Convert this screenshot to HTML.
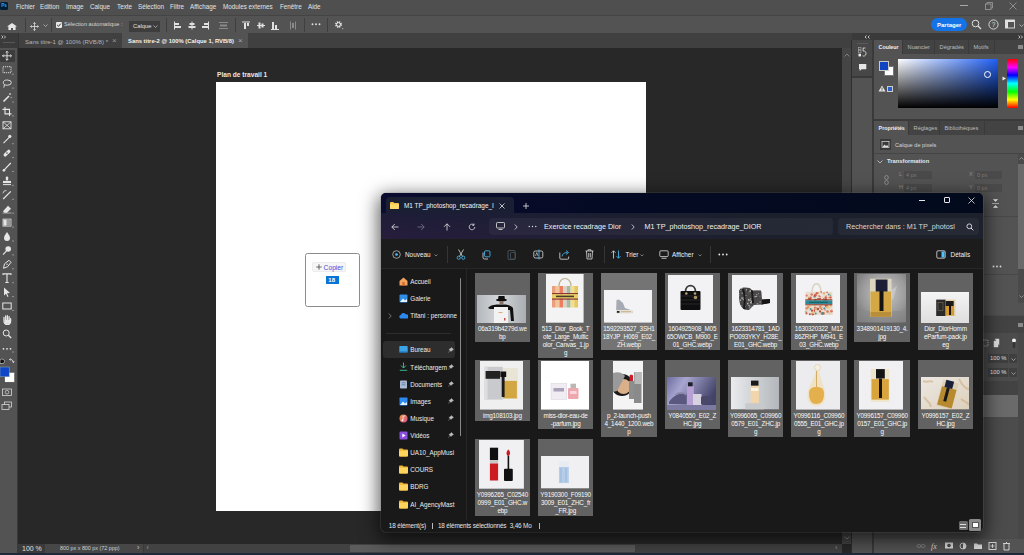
<!DOCTYPE html>
<html><head><meta charset="utf-8">
<style>
*{margin:0;padding:0;box-sizing:border-box}
html,body{width:1024px;height:555px;overflow:hidden;background:#282828;font-family:"Liberation Sans",sans-serif;}
.a{position:absolute}
.t{position:absolute;white-space:nowrap;line-height:1}
#menu{left:0;top:0;width:1024px;height:15px;background:#4f4f4f}
#menu .t{top:3.5px;font-size:6.3px;color:#e4e4e4}
#opts{left:0;top:15px;width:1024px;height:18px;background:#535353;border-top:1px solid #444}
.sep{position:absolute;width:1px;background:#3f3f3f}
#tabs{left:0;top:33px;width:852px;height:15px;background:#404040}
.ico{position:absolute;color:#d8d8d8}
#tool{left:0;top:48px;width:18px;height:505px;background:#535353;border-right:1px solid #3a3a3a}
#canvas{left:18px;top:48px;width:824px;height:496px;background:#282828}
#vscroll{left:842px;top:48px;width:10px;height:496px;background:#454545}
#art{left:216px;top:82px;width:430px;height:429px;background:#fff}
#status{left:18px;top:544px;width:824px;height:9px;background:#3a3a3a}
#taskline{left:0;top:553px;width:1024px;height:2px;background:#1e2a3c}
#rpanel{left:852px;top:33px;width:172px;height:520px;background:#3a3a3a}
.pnl{position:absolute;background:#535353}
.ptab{position:absolute;height:14px;background:#434343;font-size:5.6px;color:#bdbdbd;padding-top:3.6px;padding-left:4.6px;text-align:left;white-space:nowrap;border-right:1px solid #3a3a3a}
.ptab.on{background:#535353;color:#f0f0f0;font-weight:bold;font-size:5.3px}
#exp{left:381px;top:193px;width:602px;height:339px;background:#191919;border-radius:5px;overflow:hidden;box-shadow:0 0 0 0.6px rgba(120,120,120,0.35),0 5px 18px 3px rgba(0,0,0,0.62)}
.it{position:absolute;width:55.5px;background:#626262}
.lb{position:absolute;width:55.5px;text-align:center;font-size:6.3px;letter-spacing:-0.2px;line-height:8.3px;height:8.3px;color:#fafafa;white-space:nowrap;overflow:visible}
.nv{position:absolute;left:29.3px;width:48px;font-size:6.3px;line-height:9px;color:#ececec;white-space:nowrap;overflow:hidden}
</style></head><body>

<!-- MENU BAR -->
<div id="menu" class="a">
  <div class="a" style="left:0px;top:2px;width:8px;height:8px;background:#001e36;border-radius:1.5px;color:#31a8ff;font-size:4.6px;font-weight:bold;text-align:center;line-height:8px">Ps</div>
  <span class="t" style="left:16px">Fichier</span>
  <span class="t" style="left:40px">Edition</span>
  <span class="t" style="left:66px">Image</span>
  <span class="t" style="left:90px">Calque</span>
  <span class="t" style="left:117px">Texte</span>
  <span class="t" style="left:138px">Sélection</span>
  <span class="t" style="left:170px">Filtre</span>
  <span class="t" style="left:190px">Affichage</span>
  <span class="t" style="left:223px">Modules externes</span>
  <span class="t" style="left:280px">Fenêtre</span>
  <span class="t" style="left:308px">Aide</span>
  <div class="a" style="left:960px;top:5px;width:8px;height:0.8px;background:#a8a8a8"></div>
  <svg class="a" style="left:985px;top:2px" width="8" height="8" viewBox="0 0 8 8"><rect x="0.5" y="2" width="5.5" height="5.5" fill="none" stroke="#a8a8a8" stroke-width="0.7"/><path d="M2 2V0.5H7.5V6H6" stroke="#a8a8a8" stroke-width="0.7" fill="none"/></svg>
  <svg class="a" style="left:1009px;top:2px" width="8" height="8" viewBox="0 0 8 8"><path d="M0.5 0.5L7.5 7.5M7.5 0.5L0.5 7.5" stroke="#a8a8a8" stroke-width="0.7"/></svg>
</div>

<!-- OPTIONS BAR -->
<div id="opts" class="a">
  <svg class="a" style="left:7px;top:6.5px" width="10" height="7" viewBox="0 0 10 7"><path d="M5 0L0 3.6H1.4V7H4V5H6V7H8.6V3.6H10Z" fill="#e6e6e6"/></svg>
  <div class="sep" style="left:25px;top:2px;height:14px"></div>
  <svg class="a" style="left:29.5px;top:5.5px" width="9" height="9" viewBox="0 0 9 9"><path d="M4.5 0.5V8.5M0.5 4.5H8.5M4.5 0.5L3.3 1.7M4.5 0.5L5.7 1.7M4.5 8.5L3.3 7.3M4.5 8.5L5.7 7.3M0.5 4.5L1.7 3.3M0.5 4.5L1.7 5.7M8.5 4.5L7.3 3.3M8.5 4.5L7.3 5.7" stroke="#e0e0e0" stroke-width="0.8" fill="none"/></svg>
  <svg class="a" style="left:43px;top:8px" width="5" height="3" viewBox="0 0 5 3"><path d="M0.5 0.5L2.5 2.5L4.5 0.5" stroke="#bbb" stroke-width="0.8" fill="none"/></svg>
  <div class="sep" style="left:51px;top:2px;height:14px"></div>
  <div class="a" style="left:56px;top:6px;width:6px;height:6px;background:#e8e8e8;border-radius:1px"></div>
  <svg class="a" style="left:56px;top:6px" width="6" height="6" viewBox="0 0 6 6"><path d="M1.2 3L2.5 4.3L4.8 1.6" stroke="#333" stroke-width="1" fill="none"/></svg>
  <span class="t" style="left:64px;top:6px;font-size:5.6px;color:#d6d6d6">Sélection automatique :</span>
  <div class="a" style="left:129px;top:5px;width:31px;height:11px;background:#3d3d3d"></div>
  <span class="t" style="left:133px;top:7.5px;font-size:5.8px;color:#e0e0e0">Calque</span>
  <svg class="a" style="left:153px;top:9px" width="5" height="3" viewBox="0 0 5 3"><path d="M0.5 0.5L2.5 2.5L4.5 0.5" stroke="#bbb" stroke-width="0.8" fill="none"/></svg>
  <div class="sep" style="left:166px;top:2px;height:14px"></div>
  <svg class="a" style="left:173px;top:5px" width="170" height="10" viewBox="0 0 170 10">
    <g fill="#e0e0e0">
      <rect x="1" y="0.5" width="1" height="8"/><rect x="2" y="2" width="4" height="2"/><rect x="2" y="5" width="6" height="2"/>
      <rect x="18.5" y="0.5" width="1" height="8"/><rect x="16.5" y="2" width="5" height="2"/><rect x="15.5" y="5" width="7" height="2"/>
      <rect x="35" y="0.5" width="1" height="8"/><rect x="31" y="2" width="4" height="2"/><rect x="29" y="5" width="6" height="2"/>
      <rect x="69" y="0.5" width="8" height="1"/><rect x="71" y="2" width="2" height="6"/><rect x="74" y="2" width="2" height="3"/>
      <rect x="84" y="4" width="8" height="1"/><rect x="85.5" y="1.5" width="2" height="6"/><rect x="88.5" y="2.5" width="2" height="4"/>
      <rect x="98" y="8" width="8" height="1"/><rect x="99" y="1" width="2" height="7"/><rect x="102" y="4" width="2" height="4"/>
      <circle cx="139.5" cy="3.2" r="0.95"/><circle cx="143" cy="3.2" r="0.95"/><circle cx="146.5" cy="3.2" r="0.95"/>
    </g>
    <g fill="#8a8a8a">
      <rect x="46" y="1" width="9" height="1"/><rect x="47" y="3.5" width="7" height="2"/><rect x="46" y="7" width="9" height="1"/>
      <rect x="117" y="0.5" width="1" height="8"/><rect x="119" y="2" width="2" height="5"/><rect x="122" y="0.5" width="1" height="8"/>
    </g>
  </svg>
  <div class="sep" style="left:235px;top:2px;height:14px"></div>
  <div class="sep" style="left:304px;top:2px;height:14px"></div>
  <div class="sep" style="left:327px;top:2px;height:14px"></div>
  <svg class="a" style="left:334px;top:4px" width="10" height="10" viewBox="0 0 10 10"><circle cx="4.5" cy="4.5" r="2.6" fill="none" stroke="#e6e6e6" stroke-width="1.6" stroke-dasharray="1.3 0.75"/><circle cx="4.5" cy="4.5" r="1.9" fill="none" stroke="#e6e6e6" stroke-width="1"/><rect x="8.2" y="8.2" width="1" height="1" fill="#ccc"/></svg>
  <div class="a" style="left:931px;top:2px;width:36px;height:13px;background:#1473e6;border-radius:7px"></div>
  <span class="t" style="left:937px;top:5.5px;font-size:6px;font-weight:bold;color:#fff">Partager</span>
  <svg class="a" style="left:971px;top:3px" width="11" height="11" viewBox="0 0 11 11"><circle cx="4.5" cy="4.5" r="3.3" fill="none" stroke="#e0e0e0" stroke-width="1"/><path d="M7 7L10 10" stroke="#e0e0e0" stroke-width="1.2"/></svg>
  <svg class="a" style="left:988px;top:2.5px" width="11" height="11" viewBox="0 0 11 11"><circle cx="5.5" cy="5.5" r="4.6" fill="none" stroke="#e0e0e0" stroke-width="0.9"/><text x="5.5" y="8" font-size="6.5" text-anchor="middle" fill="#e0e0e0" font-family="Liberation Sans">?</text></svg>
  <svg class="a" style="left:1005px;top:3px" width="10" height="10" viewBox="0 0 10 10"><rect x="0.5" y="1" width="9" height="8" fill="none" stroke="#e0e0e0" stroke-width="0.9"/><rect x="0.5" y="1" width="9" height="2" fill="#e0e0e0"/><rect x="0.5" y="1" width="2.5" height="8" fill="#e0e0e0"/></svg>
  <svg class="a" style="left:1019px;top:8px" width="5" height="3" viewBox="0 0 5 3"><path d="M0.5 0.5L2.5 2.5L4.5 0.5" stroke="#bbb" stroke-width="0.8" fill="none"/></svg>
</div>

<!-- TABS -->
<div id="tabs" class="a">
  <div class="a" style="left:0;top:0;width:19px;height:15px;background:#3b3b3b;border-right:1px solid #333"></div>
  <svg class="a" style="left:1px;top:2px" width="6" height="4" viewBox="0 0 6 4"><path d="M0.5 0.5L2 2L0.5 3.5M3 0.5L4.5 2L3 3.5" stroke="#ddd" stroke-width="0.8" fill="none"/></svg>
  <div class="a" style="left:3px;top:8.5px;width:12px;height:1.5px;background:#585858"></div>
  <div class="a" style="left:19px;top:0;width:103px;height:15px;background:#404040"></div>
  <span class="t" style="left:25px;top:5.8px;font-size:6.05px;color:#b4b4b4">Sans titre-1 @ 100% (RVB/8) *</span>
  <span class="t" style="left:112px;top:4.3px;font-size:8px;color:#9a9a9a">×</span>
  <div class="a" style="left:122px;top:0;width:126px;height:15px;background:#535353"></div>
  <span class="t" style="left:128px;top:5.8px;font-size:5.85px;font-weight:bold;color:#f2f2f2">Sans titre-2 @ 100% (Calque 1, RVB/8)</span>
  <span class="t" style="left:238px;top:4.3px;font-size:8px;color:#a8a8a8">×</span>
</div>

<!-- TOOLBAR -->
<div id="tool" class="a">
<div class="a" style="left:0;top:2px;width:15px;height:11.5px;background:#3c3c3c;border-radius:1px"></div><svg class="a" style="left:0;top:-48px" width="18" height="500" viewBox="0 0 18 500"><g transform="translate(7,55.8)"><path d="M0 -4.5V4.5M-4.5 0H4.5M0 -4.5L-1.3 -3.2M0 -4.5L1.3 -3.2M0 4.5L-1.3 3.2M0 4.5L1.3 3.2M-4.5 0L-3.2 -1.3M-4.5 0L-3.2 1.3M4.5 0L3.2 -1.3M4.5 0L3.2 1.3" stroke="#e6e6e6" stroke-width="0.9" fill="none"/></g><g transform="translate(7,69.7)"><rect x="-4" y="-3" width="8" height="6" fill="none" stroke="#e6e6e6" stroke-width="0.9" stroke-dasharray="1.2 0.8"/></g><g transform="translate(7,83.6)"><ellipse cx="0.3" cy="-1" rx="4" ry="2.6" fill="none" stroke="#e6e6e6" stroke-width="0.9"/><path d="M-2.5 1L-3.2 4" stroke="#e6e6e6" stroke-width="0.9"/></g><g transform="translate(7,97.5)"><path d="M-3.5 4L2 -1.5" stroke="#e6e6e6" stroke-width="1.6"/><path d="M3 -4.5V-2.5M2 -3.5H4M4.2 -0.5V0.7" stroke="#e6e6e6" stroke-width="0.7"/></g><g transform="translate(7,111.4)"><path d="M-2 -4.5V2.5H4.5M-4.5 -2H2.5V4.5" stroke="#e6e6e6" stroke-width="1.1" fill="none"/></g><g transform="translate(7,125.3)"><rect x="-4" y="-3.5" width="8" height="7" fill="none" stroke="#e6e6e6" stroke-width="0.9"/><path d="M-4 -3.5L4 3.5M4 -3.5L-4 3.5" stroke="#e6e6e6" stroke-width="0.8"/></g><g transform="translate(7,139.2)"><path d="M-3.5 4L2 -1.5" stroke="#e6e6e6" stroke-width="1.1"/><circle cx="2.8" cy="-2.8" r="1.6" fill="#e6e6e6"/></g><g transform="translate(7,153.1)"><rect x="-4.2" y="-1.6" width="8.4" height="3.2" rx="1.6" transform="rotate(-45)" fill="#e6e6e6"/><circle cx="0" cy="0" r="0.8" fill="#535353"/></g><g transform="translate(7,167.0)"><path d="M-3.8 4.2L-1.6 1.6L3.8 -4" stroke="#e6e6e6" stroke-width="1.2" fill="none"/><circle cx="-3" cy="3.2" r="1.3" fill="#e6e6e6"/></g><g transform="translate(7,180.9)"><rect x="-1.2" y="-4.5" width="2.4" height="4" rx="1" fill="#e6e6e6"/><rect x="-4" y="0" width="8" height="2.2" fill="#e6e6e6"/><rect x="-4" y="3.2" width="8" height="1" fill="#e6e6e6"/></g><g transform="translate(7,194.8)"><path d="M-3.8 4.2L3.8 -3.5" stroke="#e6e6e6" stroke-width="1.2"/><path d="M-4 -1.5A3 3 0 0 1 -0.5 -4.2" stroke="#e6e6e6" stroke-width="0.8" fill="none"/></g><g transform="translate(7,208.7)"><path d="M-4 2.5L1 -3L4 0L0 4H-2.5Z" fill="#e6e6e6"/><path d="M-4.5 4.3H4.5" stroke="#e6e6e6" stroke-width="0.6"/></g><g transform="translate(7,222.6)"><rect x="-4" y="-3.5" width="8" height="7" fill="none" stroke="#e6e6e6" stroke-width="0.8"/><rect x="-3.5" y="-3" width="7" height="6" fill="#9a9a9a"/><rect x="-3.5" y="-3" width="3" height="6" fill="#e6e6e6"/></g><g transform="translate(7,236.5)"><path d="M0 -4.5C-2 -1.5 -3 0 -3 1.5A3 3 0 0 0 3 1.5C3 0 2 -1.5 0 -4.5Z" fill="#e6e6e6"/></g><g transform="translate(7,250.4)"><circle cx="1.2" cy="-1.4" r="2.8" fill="#e6e6e6"/><path d="M-0.5 0.5L-4 4.2" stroke="#e6e6e6" stroke-width="1.2"/></g><g transform="translate(7,264.3)"><path d="M-3.5 4L-2.5 -0.5L2 -4L4 -2L0.5 2.5Z" fill="none" stroke="#e6e6e6" stroke-width="1"/><circle cx="0" cy="0" r="0.7" fill="#e6e6e6"/></g><g transform="translate(7,278.2)"><path d="M-4 -3.3V-4.3H4V-3.3M0 -4.3V4.3M-1.7 4.3H1.7" stroke="#e6e6e6" stroke-width="1.1" fill="none"/></g><g transform="translate(7,292.1)"><path d="M-3 -4.5L3 1L0 1.2L1.5 4.5L0.5 4.8L-1 1.7L-3 3.5Z" fill="#e6e6e6"/></g><g transform="translate(7,306.0)"><rect x="-4.2" y="-3" width="8.4" height="6" fill="none" stroke="#e6e6e6" stroke-width="1"/></g><g transform="translate(7,319.9)"><path d="M-3 1V-2.5M-1.3 0V-4M0.4 0V-4.2M2.1 0.5V-3.2M3.6 1.5V-1.2M-3 1C-3 4 -1.5 4.5 0.5 4.5C2.5 4.5 3.6 3.5 3.6 1" stroke="#e6e6e6" stroke-width="1.3" fill="none" stroke-linecap="round"/><rect x="-2.5" y="0" width="5.5" height="4" fill="#e6e6e6"/></g><g transform="translate(7,333.8)"><circle cx="-0.8" cy="-0.8" r="3" fill="none" stroke="#e6e6e6" stroke-width="1"/><path d="M1.4 1.4L4.2 4.2" stroke="#e6e6e6" stroke-width="1.3"/></g><rect x="12.5" y="73.7" width="1" height="1" fill="#cfcfcf"/><rect x="12.5" y="87.6" width="1" height="1" fill="#cfcfcf"/><rect x="12.5" y="101.5" width="1" height="1" fill="#cfcfcf"/><rect x="12.5" y="115.4" width="1" height="1" fill="#cfcfcf"/><rect x="12.5" y="143.2" width="1" height="1" fill="#cfcfcf"/><rect x="12.5" y="157.1" width="1" height="1" fill="#cfcfcf"/><rect x="12.5" y="171.0" width="1" height="1" fill="#cfcfcf"/><rect x="12.5" y="184.9" width="1" height="1" fill="#cfcfcf"/><rect x="12.5" y="198.8" width="1" height="1" fill="#cfcfcf"/><rect x="12.5" y="212.7" width="1" height="1" fill="#cfcfcf"/><rect x="12.5" y="226.6" width="1" height="1" fill="#cfcfcf"/><rect x="12.5" y="240.5" width="1" height="1" fill="#cfcfcf"/><rect x="12.5" y="254.4" width="1" height="1" fill="#cfcfcf"/><rect x="12.5" y="268.3" width="1" height="1" fill="#cfcfcf"/><rect x="12.5" y="282.2" width="1" height="1" fill="#cfcfcf"/><rect x="12.5" y="296.1" width="1" height="1" fill="#cfcfcf"/><rect x="12.5" y="310.0" width="1" height="1" fill="#cfcfcf"/>
<g fill="#e6e6e6"><circle cx="3.5" cy="348.8" r="0.9"/><circle cx="7" cy="348.8" r="0.9"/><circle cx="10.5" cy="348.8" r="0.9"/></g>
<rect x="12.5" y="351.5" width="1" height="1" fill="#cfcfcf"/>
<path d="M0 360A2.5 2 0 0 1 4.5 361.5L3.5 363.5H0Z" fill="#111" stroke="#ddd" stroke-width="0.6"/>
<path d="M9.5 359.5C11.5 359 13 360 13.5 362.5M13.5 362.5L12.2 361.6M13.5 362.5L14.2 361.2M9.5 359.5L10.5 358.5M9.5 359.5L10.6 360.4" stroke="#e6e6e6" stroke-width="0.8" fill="none"/>
<rect x="4.7" y="372.4" width="9.9" height="9.8" fill="#fff" stroke="#444" stroke-width="0.5"/>
<rect x="0" y="367" width="9.2" height="9.8" fill="#0d47c7" stroke="#9aa" stroke-width="0.5"/>
<rect x="2.5" y="389" width="9" height="6.5" fill="none" stroke="#d6d6d6" stroke-width="0.8"/><circle cx="7" cy="392.2" r="1.8" fill="none" stroke="#d6d6d6" stroke-width="0.7"/>
<rect x="4.5" y="402" width="7" height="5" fill="none" stroke="#d6d6d6" stroke-width="0.8"/><rect x="2" y="404.5" width="7" height="5" fill="#535353" stroke="#d6d6d6" stroke-width="0.8"/>
</svg></div>

<!-- CANVAS -->
<div id="canvas" class="a"></div>
<div id="vscroll" class="a"><svg class="a" style="left:2px;top:5px" width="6" height="4" viewBox="0 0 6 4"><path d="M0.5 3.5L3 1L5.5 3.5" stroke="#9a9a9a" stroke-width="0.7" fill="none"/></svg><svg class="a" style="left:2px;top:488px" width="6" height="4" viewBox="0 0 6 4"><path d="M0.5 0.5L3 3L5.5 0.5" stroke="#9a9a9a" stroke-width="0.7" fill="none"/></svg></div>
<div class="a" style="left:851px;top:40px;width:1px;height:513px;background:#2e2e2e"></div>
<span class="t" style="left:217px;top:72px;font-size:6.6px;font-weight:bold;color:#e8e8e8">Plan de travail 1</span>
<div id="art" class="a"></div>

<!-- STATUS -->
<div id="status" class="a">
  <div class="a" style="left:1px;top:0;width:26px;height:9px;background:#3a3a3a"></div>
  <span class="t" style="left:4px;top:1px;font-size:7px;color:#e0e0e0">100 %</span>
  <div class="a" style="left:27px;top:0;width:98px;height:9px;background:#474747"></div>
  <span class="t" style="left:42px;top:2px;font-size:5.4px;color:#cfcfcf">800 px x 800 px (72 ppp)</span>
  <span class="t" style="left:119px;top:0px;font-size:7px;color:#cfcfcf">›</span>
  <div class="a" style="left:126px;top:0;width:698px;height:9px;background:#424242"></div>
  <span class="t" style="left:128.5px;top:0px;font-size:7px;color:#9a9a9a">‹</span>
  <div class="a" style="left:332px;top:1px;width:285px;height:7px;background:#5c5c5c;border-radius:1px"></div>
  <span class="t" style="left:817px;top:0px;font-size:7px;color:#9a9a9a">›</span>
</div>
<div id="taskline" class="a"></div>

<!-- RIGHT PANELS -->
<div id="rpanel" class="a">
  <!-- relative coords: origin 852,33 -->
  <svg class="a" style="left:12px;top:2px" width="6" height="4" viewBox="0 0 6 4"><path d="M2.5 0.5L1 2L2.5 3.5M5.5 0.5L4 2L5.5 3.5" stroke="#ddd" stroke-width="0.8" fill="none"/></svg>
  <svg class="a" style="left:166px;top:2px" width="6" height="4" viewBox="0 0 6 4"><path d="M0.5 0.5L2 2L0.5 3.5M3 0.5L4.5 2L3 3.5" stroke="#ddd" stroke-width="0.8" fill="none"/></svg>
  <!-- icon column -->
  <div class="pnl" style="left:0;top:6.5px;width:20px;height:36.5px;background:#474747"></div>
  <div class="a" style="left:5px;top:9.5px;width:11px;height:0.8px;background:#5a5a5a"></div>
  <svg class="a" style="left:6px;top:14px" width="9" height="10" viewBox="0 0 9 10"><rect x="0.5" y="0.5" width="2.5" height="2.2" fill="none" stroke="#aaa" stroke-width="0.6"/><rect x="0.5" y="3.6" width="2.5" height="2.2" fill="none" stroke="#aaa" stroke-width="0.6"/><rect x="0.5" y="6.8" width="2.5" height="2.6" fill="#eee"/><path d="M4.8 1H7.5M5.3 1L5 4C7 3.6 8.3 5 8 7C7.6 9 5.8 9.4 4.6 8.8" stroke="#e6e6e6" stroke-width="0.8" fill="none"/></svg>
  <svg class="a" style="left:7px;top:30.5px" width="8" height="8" viewBox="0 0 8 8"><path d="M0 0H7.3V5.2H2.5L0.8 7V5.2H0Z" fill="#e6e6e6"/></svg>
  <div class="pnl" style="left:0;top:45px;width:20px;height:475px;background:#535353"></div>
  <!-- Color panel -->
  <div class="pnl" style="left:22px;top:7px;width:150px;height:79px"></div>
  <div class="ptab on" style="left:22px;top:7px;width:29px">Couleur</div>
  <div class="ptab" style="left:51px;top:7px;width:32px">Nuancier</div>
  <div class="ptab" style="left:83px;top:7px;width:34px">Dégradés</div>
  <div class="ptab" style="left:117px;top:7px;width:26px">Motifs</div>
  <div class="ptab" style="left:143px;top:7px;width:29px;border-right:0"></div>
  <div class="a" style="left:166px;top:12px;width:5px;height:4px;background:#8a8a8a"></div>
  <div class="a" style="left:32px;top:33px;width:10px;height:10px;background:#fff;border:0.5px solid #777"></div>
  <div class="a" style="left:27px;top:28px;width:10px;height:10px;background:#0f45c0;border:1px solid #c8c8c8"></div>
  <svg class="a" style="left:26px;top:52px" width="8" height="7" viewBox="0 0 8 7"><path d="M4 0.5L7.5 6.5H0.5Z" fill="#e6e6e6"/><rect x="3.6" y="2.5" width="0.8" height="2.2" fill="#333"/><rect x="3.6" y="5.2" width="0.8" height="0.7" fill="#333"/></svg>
  <div class="a" style="left:35px;top:53px;width:6px;height:6px;background:#2a5fc7;border:0.6px solid #ccc"></div>
  <div class="a" style="left:46px;top:26px;width:100px;height:49px;background:linear-gradient(to right,#fff,#1f5ff5)"></div>
  <div class="a" style="left:46px;top:26px;width:100px;height:49px;background:linear-gradient(to bottom,rgba(0,0,0,0),#000)"></div>
  <div class="a" style="left:132.2px;top:38.2px;width:7px;height:7px;border:0.8px solid #fff;border-radius:50%"></div>
  <svg class="a" style="left:150px;top:43px" width="5" height="5" viewBox="0 0 5 5"><path d="M0.5 0.5L4 2.5L0.5 4.5Z" fill="#eee"/></svg>
  <div class="a" style="left:155px;top:26px;width:11px;height:49px;background:linear-gradient(to bottom,#ff0000,#ff00ff 17%,#0000ff 33%,#00ffff 50%,#00ff00 67%,#ffff00 83%,#ff0000)"></div>
  <!-- Properties -->
  <div class="pnl" style="left:22px;top:88px;width:150px;height:194.5px"></div>
  <div class="ptab on" style="left:22px;top:88px;width:35px">Propriétés</div>
  <div class="ptab" style="left:57px;top:88px;width:31px">Réglages</div>
  <div class="ptab" style="left:88px;top:88px;width:45px">Bibliothèques</div>
  <div class="ptab" style="left:133px;top:88px;width:39px;border-right:0"></div>
  <div class="a" style="left:166px;top:93px;width:5px;height:4px;background:#8a8a8a"></div>
  <div class="a" style="left:28px;top:106px;width:11px;height:11px;background:#3a3a3a"></div>
  <svg class="a" style="left:29px;top:107px" width="9" height="9" viewBox="0 0 9 9"><rect x="1" y="1.5" width="7" height="6" fill="none" stroke="#ddd" stroke-width="0.7"/><path d="M1.3 7.2L3.5 4.5L5 6L6.2 5L7.7 7.2Z" fill="#ddd"/></svg>
  <span class="t" style="left:43px;top:110.3px;font-size:5.6px;color:#d6d6d6">Calque de pixels</span>
  <div class="a" style="left:22px;top:120px;width:150px;height:1px;background:#444"></div>
  <svg class="a" style="left:25px;top:127px" width="6" height="4" viewBox="0 0 6 4"><path d="M0.5 0.5L3 3L5.5 0.5" stroke="#ccc" stroke-width="0.8" fill="none"/></svg>
  <span class="t" style="left:35px;top:126px;font-size:5.8px;font-weight:bold;color:#e8e8e8">Transformation</span>
  <span class="t" style="left:47px;top:139.3px;font-size:5.5px;color:#8c8c8c">L</span>
  <div class="a" style="left:52px;top:138px;width:28px;height:8px;background:#4a4a4a"></div>
  <span class="t" style="left:54px;top:139.5px;font-size:5.5px;color:#7c7c7c">4 px</span>
  <span class="t" style="left:47px;top:152.3px;font-size:5.5px;color:#8c8c8c">H</span>
  <div class="a" style="left:52px;top:151px;width:28px;height:8px;background:#4a4a4a"></div>
  <span class="t" style="left:54px;top:152.5px;font-size:5.5px;color:#7c7c7c">4 px</span>
  <svg class="a" style="left:32px;top:142px" width="5" height="10" viewBox="0 0 5 10"><ellipse cx="2.5" cy="2.5" rx="1.8" ry="2" fill="none" stroke="#999" stroke-width="0.8"/><ellipse cx="2.5" cy="7.5" rx="1.8" ry="2" fill="none" stroke="#999" stroke-width="0.8"/></svg>
  <span class="t" style="left:117px;top:139.3px;font-size:5.5px;color:#8c8c8c">X</span>
  <div class="a" style="left:123px;top:138px;width:27px;height:8px;background:#4a4a4a"></div>
  <span class="t" style="left:125px;top:139.5px;font-size:5.5px;color:#7c7c7c">0 px</span>
  <span class="t" style="left:117px;top:152.3px;font-size:5.5px;color:#8c8c8c">Y</span>
  <div class="a" style="left:123px;top:151px;width:27px;height:8px;background:#4a4a4a"></div>
  <span class="t" style="left:125px;top:152.5px;font-size:5.5px;color:#7c7c7c">0 px</span>
  <div class="a" style="left:166px;top:121px;width:6px;height:149px;background:#4a4a4a"></div>
  <div class="a" style="left:166px;top:131px;width:6px;height:105px;background:#6a6a6a"></div>
  <svg class="a" style="left:167px;top:124px" width="5" height="3" viewBox="0 0 5 3"><path d="M0.5 2.5L2.5 0.5L4.5 2.5" stroke="#aaa" stroke-width="0.7" fill="none"/></svg>
  <svg class="a" style="left:139px;top:166px" width="9" height="9" viewBox="0 0 9 9"><path d="M1 4.5H8M2.5 0.5H6.5L4.5 2.5Z M2.5 8.5H6.5L4.5 6.5Z" stroke="#ddd" stroke-width="0.6" fill="#ddd"/></svg>
  <div class="a" style="left:22px;top:183px;width:144px;height:1px;background:#484848"></div>
  <g></g>
  <svg class="a" style="left:139.5px;top:232.2px" width="10" height="3" viewBox="0 0 10 3"><circle cx="1.5" cy="1.5" r="0.9" fill="#e0e0e0"/><circle cx="5" cy="1.5" r="0.9" fill="#e0e0e0"/><circle cx="8.5" cy="1.5" r="0.9" fill="#e0e0e0"/></svg>
  <div class="a" style="left:22px;top:241px;width:144px;height:1px;background:#484848"></div>
  <svg class="a" style="left:167px;top:262px" width="5" height="3" viewBox="0 0 5 3"><path d="M0.5 0.5L2.5 2.5L4.5 0.5" stroke="#aaa" stroke-width="0.7" fill="none"/></svg>
  <!-- Layers -->
  <div class="pnl" style="left:22px;top:282px;width:150px;height:238px;background:#4c4c4c"></div>
  <div class="ptab" style="left:22px;top:282.5px;width:150px;height:17px;border-right:0;background:#434343"></div>
  <div class="a" style="left:166px;top:290px;width:5px;height:4px;background:#8a8a8a"></div>
  <svg class="a" style="left:128px;top:305px" width="44" height="10" viewBox="0 0 44 10"><rect x="1" y="2" width="7" height="6" fill="none" stroke="#ddd" stroke-width="0.7" stroke-dasharray="1 0.8"/><path d="M14 3H18V9H14Z M15 1H19V7" fill="#ddd" stroke="#ddd" stroke-width="0.5"/><circle cx="34" cy="2.5" r="2" fill="#eee"/><rect x="32.8" y="4" width="2.4" height="6" rx="1" fill="#333"/></svg>
  <div class="a" style="left:136px;top:321px;width:20px;height:9px;background:#3f3f3f"></div>
  <span class="t" style="left:138px;top:323px;font-size:5.8px;color:#e0e0e0">100 %</span>
  <div class="a" style="left:157px;top:321px;width:8px;height:9px;background:#3f3f3f"></div>
  <svg class="a" style="left:159px;top:325px" width="5" height="3" viewBox="0 0 5 3"><path d="M0.5 0.5L2.5 2.5L4.5 0.5" stroke="#bbb" stroke-width="0.7" fill="none"/></svg>
  <div class="a" style="left:136px;top:335px;width:20px;height:9px;background:#3f3f3f"></div>
  <span class="t" style="left:138px;top:337px;font-size:5.8px;color:#e0e0e0">100 %</span>
  <div class="a" style="left:157px;top:335px;width:8px;height:9px;background:#3f3f3f"></div>
  <svg class="a" style="left:159px;top:339px" width="5" height="3" viewBox="0 0 5 3"><path d="M0.5 0.5L2.5 2.5L4.5 0.5" stroke="#bbb" stroke-width="0.7" fill="none"/></svg>
  <div class="a" style="left:22px;top:348px;width:144px;height:14px;background:#434343"></div>
  <div class="a" style="left:22px;top:362px;width:144px;height:22px;background:#6a6a6a"></div>
  <div class="a" style="left:166px;top:300px;width:6px;height:206px;background:#484848"></div>
  <div class="a" style="left:22px;top:506px;width:150px;height:14px;background:#535353"></div>
  <svg class="a" style="left:64px;top:508px" width="108" height="10" viewBox="0 0 108 10">
   <g fill="none" stroke="#8a8a8a" stroke-width="0.8"><ellipse cx="3" cy="5" rx="2" ry="1.5"/><ellipse cx="7" cy="5" rx="2" ry="1.5"/></g>
   <text x="15" y="8" font-size="8" font-style="italic" fill="#ddd" font-family="Liberation Serif">fx</text>
   <rect x="29" y="1.5" width="8" height="6" fill="#ddd"/><circle cx="33" cy="4.5" r="1.8" fill="#4c4c4c"/>
   <circle cx="47" cy="5" r="3" fill="none" stroke="#ddd" stroke-width="0.9"/><path d="M47 2A3 3 0 0 1 47 8Z" fill="#ddd"/>
   <path d="M58 2.5H61L62 3.5H66V8H58Z" fill="#ddd"/>
   <rect x="73" y="1.5" width="7" height="7" fill="none" stroke="#ddd" stroke-width="0.9"/><path d="M76.5 3V7M74.5 5H78.5" stroke="#ddd" stroke-width="0.8"/>
   <path d="M87 2.5H94M88 3V9H93V3M90 1.5H91" stroke="#ddd" stroke-width="0.9" fill="none"/>
  </svg>
</div>

<!-- EXPLORER -->
<div id="exp" class="a">
  <div class="a" style="left:0;top:0;width:602px;height:20px;background:linear-gradient(to right,#0b0c30 0%,#050a24 35%,#020a1c 100%)"></div>
  <div class="a" style="left:4.7px;top:4.4px;width:128px;height:16px;background:#1b1f33;border-radius:4px 4px 0 0"></div>
  <svg class="a" style="left:9px;top:8.5px" width="9" height="7" viewBox="0 0 9 7"><path d="M0 1A1 1 0 0 1 1 0H3.3L4.3 1H8A1 1 0 0 1 9 2V6A1 1 0 0 1 8 7H1A1 1 0 0 1 0 6Z" fill="#f4c542"/><path d="M0 2.2H9V6A1 1 0 0 1 8 7H1A1 1 0 0 1 0 6Z" fill="#ffd86b"/></svg>
  <span class="t" style="left:23px;top:10.2px;font-size:6.4px;color:#f4f4f4">M1 TP_photoshop_recadrage_I</span>
  <svg class="a" style="left:118px;top:10px" width="6" height="6" viewBox="0 0 6 6"><path d="M0.5 0.5L5.5 5.5M5.5 0.5L0.5 5.5" stroke="#e6e6e6" stroke-width="0.8"/></svg>
  <svg class="a" style="left:141.5px;top:10px" width="6" height="6" viewBox="0 0 6 6"><path d="M3 0V6M0 3H6" stroke="#e6e6e6" stroke-width="0.8"/></svg>
  <div class="a" style="left:538px;top:7px;width:6px;height:0.8px;background:#e6e6e6"></div>
  <div class="a" style="left:562.5px;top:4px;width:6px;height:6px;border:0.8px solid #e6e6e6;border-radius:1px"></div>
  <svg class="a" style="left:587px;top:4px" width="7" height="7" viewBox="0 0 7 7"><path d="M0.5 0.5L6.5 6.5M6.5 0.5L0.5 6.5" stroke="#e6e6e6" stroke-width="0.8"/></svg>

  <div class="a" style="left:0;top:20px;width:602px;height:26px;background:linear-gradient(to right,#1d1d38 0%,#1c1f33 30%,#1c202d 60%,#1c212b 100%)"></div>
  <div class="a" style="left:0;top:20px;width:602px;height:26px;background:linear-gradient(to bottom,rgba(40,20,60,0) 0%,rgba(60,30,70,0.35) 100%);-webkit-mask-image:linear-gradient(to right,#000 0%,rgba(0,0,0,0.5) 30%,rgba(0,0,0,0) 60%)"></div>
  <svg class="a" style="left:10px;top:29.8px" width="8" height="8" viewBox="0 0 8 8"><path d="M7.5 4H0.8M3.8 1L0.8 4L3.8 7" stroke="#e6e6e6" stroke-width="0.8" fill="none"/></svg>
  <svg class="a" style="left:36px;top:29.8px" width="8" height="8" viewBox="0 0 8 8"><path d="M0.5 4H7.2M4.2 1L7.2 4L4.2 7" stroke="#7a7a85" stroke-width="0.8" fill="none"/></svg>
  <svg class="a" style="left:61.5px;top:29.8px" width="8" height="8" viewBox="0 0 8 8"><path d="M4 7.5V0.8M1 3.8L4 0.8L7 3.8" stroke="#e6e6e6" stroke-width="0.8" fill="none"/></svg>
  <svg class="a" style="left:87px;top:29.8px" width="8" height="8" viewBox="0 0 8 8"><path d="M6.8 4A2.8 2.8 0 1 1 5.8 1.8M6 0.5V2.3H4.2" stroke="#e6e6e6" stroke-width="0.8" fill="none"/></svg>
  <div class="a" style="left:108px;top:25px;width:344px;height:17px;background:rgba(255,255,255,0.045);border-radius:4px"></div>
  <svg class="a" style="left:114.5px;top:29px" width="9" height="8" viewBox="0 0 9 8"><rect x="0.5" y="0.5" width="8" height="5.5" rx="0.8" fill="none" stroke="#e6e6e6" stroke-width="0.8"/><path d="M2.5 7.5H6.5" stroke="#e6e6e6" stroke-width="0.8"/></svg>
  <svg class="a" style="left:133px;top:30.5px" width="4" height="6" viewBox="0 0 4 6"><path d="M0.8 0.5L3.2 3L0.8 5.5" stroke="#e0e0e0" stroke-width="0.8" fill="none"/></svg>
  <svg class="a" style="left:146.5px;top:32px" width="9" height="3" viewBox="0 0 9 3"><circle cx="1.2" cy="1.5" r="0.7" fill="#e0e0e0"/><circle cx="4.5" cy="1.5" r="0.7" fill="#e0e0e0"/><circle cx="7.8" cy="1.5" r="0.7" fill="#e0e0e0"/></svg>
  <span class="t" style="left:163px;top:29.8px;font-size:7.2px;color:#f0f0f0">Exercice recadrage Dior</span>
  <svg class="a" style="left:249.5px;top:30.5px" width="4" height="6" viewBox="0 0 4 6"><path d="M0.8 0.5L3.2 3L0.8 5.5" stroke="#e0e0e0" stroke-width="0.8" fill="none"/></svg>
  <span class="t" style="left:263.5px;top:29.8px;font-size:7.2px;color:#f0f0f0">M1 TP_photoshop_recadrage_DIOR</span>
  <div class="a" style="left:457px;top:25px;width:141.4px;height:17px;background:rgba(255,255,255,0.045);border-radius:4px"></div>
  <span class="t" style="left:465px;top:29.8px;font-size:7.2px;color:#d8d8d8">Rechercher dans : M1 TP_photosl</span>
  <svg class="a" style="left:585px;top:29.5px" width="8" height="8" viewBox="0 0 8 8"><circle cx="3.3" cy="3.3" r="2.4" fill="none" stroke="#e0e0e0" stroke-width="0.9"/><path d="M5 5L7.3 7.3" stroke="#e0e0e0" stroke-width="1"/></svg>

  <div class="a" style="left:0;top:46px;width:602px;height:30px;background:#1c1c1c;border-bottom:1px solid #272727"></div>
  <svg class="a" style="left:10.5px;top:57px" width="9" height="9" viewBox="0 0 9 9"><circle cx="4.5" cy="4.5" r="3.8" fill="none" stroke="#d0d0d0" stroke-width="0.7"/><circle cx="4.5" cy="4.5" r="1.3" fill="#4cc2ff"/></svg>
  <span class="t" style="left:24px;top:58.8px;font-size:6.4px;color:#f0f0f0">Nouveau</span>
  <svg class="a" style="left:52.5px;top:60.5px" width="4" height="3" viewBox="0 0 4 3"><path d="M0.5 0.5L2 2L3.5 0.5" stroke="#bbb" stroke-width="0.6" fill="none"/></svg>
  <div class="a" style="left:65.5px;top:53px;width:0.8px;height:17px;background:#353535"></div>
  <svg class="a" style="left:74.5px;top:56px" width="10" height="11" viewBox="0 0 10 11"><path d="M2.5 0.5L6.5 7.5M7.5 0.5L3.5 7.5" stroke="#e0e0e0" stroke-width="0.8"/><circle cx="2.7" cy="8.7" r="1.6" fill="none" stroke="#4cc2ff" stroke-width="0.8"/><circle cx="7.3" cy="8.7" r="1.6" fill="none" stroke="#4cc2ff" stroke-width="0.8"/></svg>
  <svg class="a" style="left:100px;top:56.5px" width="10" height="10" viewBox="0 0 10 10"><rect x="3.5" y="0.8" width="5.5" height="6" rx="1.2" fill="none" stroke="#4cc2ff" stroke-width="0.8"/><path d="M2 2.5V7.5A1.5 1.5 0 0 0 3.5 9H7" stroke="#e0e0e0" stroke-width="0.8" fill="none"/></svg>
  <svg class="a" style="left:125.5px;top:56px" width="10" height="11" viewBox="0 0 10 11"><rect x="1" y="1.5" width="7" height="9" rx="1" fill="none" stroke="#5a5a5a" stroke-width="0.8"/><rect x="3.5" y="3.5" width="5" height="6.5" rx="0.8" fill="none" stroke="#3e5a6a" stroke-width="0.8"/></svg>
  <svg class="a" style="left:152px;top:56px" width="11" height="11" viewBox="0 0 11 11"><rect x="0.8" y="2" width="9" height="7" rx="1.5" fill="none" stroke="#e0e0e0" stroke-width="0.8"/><path d="M6 0.5V10.5" stroke="#4cc2ff" stroke-width="0.8"/><path d="M2.5 7L3.8 3.5L5 7" stroke="#e0e0e0" stroke-width="0.6" fill="none"/></svg>
  <svg class="a" style="left:177.5px;top:56px" width="11" height="11" viewBox="0 0 11 11"><path d="M0.8 3.5V9A1.2 1.2 0 0 0 2 10.2H8.5A1.2 1.2 0 0 0 9.7 9V7.5" stroke="#e0e0e0" stroke-width="0.8" fill="none"/><path d="M3 7.5C3.5 4.5 5.5 3.5 8.5 3.5M7 1.5L9.5 3.5L7 5.5" stroke="#4cc2ff" stroke-width="0.8" fill="none"/></svg>
  <svg class="a" style="left:203.5px;top:56px" width="9" height="11" viewBox="0 0 9 11"><path d="M0.5 2H8.5M3 2V0.8H6V2M1.5 2L2 10H7L7.5 2M3.7 4V8.5M5.3 4V8.5" stroke="#e0e0e0" stroke-width="0.8" fill="none"/></svg>
  <div class="a" style="left:222.5px;top:53px;width:0.8px;height:17px;background:#353535"></div>
  <svg class="a" style="left:230px;top:57px" width="10" height="9" viewBox="0 0 10 9"><path d="M2.5 8.5V0.8M0.5 2.8L2.5 0.8L4.5 2.8" stroke="#e0e0e0" stroke-width="0.8" fill="none"/><path d="M7.5 0.5V8.2M5.5 6.2L7.5 8.2L9.5 6.2" stroke="#4cc2ff" stroke-width="0.8" fill="none"/></svg>
  <span class="t" style="left:244.5px;top:58.8px;font-size:6.4px;color:#f0f0f0">Trier</span>
  <svg class="a" style="left:259px;top:60.5px" width="4" height="3" viewBox="0 0 4 3"><path d="M0.5 0.5L2 2L3.5 0.5" stroke="#bbb" stroke-width="0.6" fill="none"/></svg>
  <svg class="a" style="left:277.5px;top:57px" width="10" height="9" viewBox="0 0 10 9"><rect x="0.8" y="0.8" width="8.4" height="5.8" rx="1" fill="none" stroke="#e0e0e0" stroke-width="0.8"/><path d="M2.5 8.3H7.5" stroke="#e0e0e0" stroke-width="0.8"/></svg>
  <span class="t" style="left:291px;top:58.8px;font-size:6.4px;color:#f0f0f0">Afficher</span>
  <svg class="a" style="left:317px;top:60.5px" width="4" height="3" viewBox="0 0 4 3"><path d="M0.5 0.5L2 2L3.5 0.5" stroke="#bbb" stroke-width="0.6" fill="none"/></svg>
  <div class="a" style="left:329px;top:53px;width:0.8px;height:17px;background:#353535"></div>
  <svg class="a" style="left:337px;top:60px" width="10" height="3" viewBox="0 0 10 3"><circle cx="1.3" cy="1.5" r="0.9" fill="#e6e6e6"/><circle cx="5" cy="1.5" r="0.9" fill="#e6e6e6"/><circle cx="8.7" cy="1.5" r="0.9" fill="#e6e6e6"/></svg>
  <svg class="a" style="left:555px;top:57px" width="10" height="9" viewBox="0 0 10 9"><rect x="0.8" y="0.8" width="8.4" height="7.4" rx="1.2" fill="none" stroke="#e0e0e0" stroke-width="0.8"/><rect x="5.5" y="1.5" width="3" height="6" fill="#4cc2ff"/></svg>
  <span class="t" style="left:569.6px;top:58.8px;font-size:6.4px;color:#f0f0f0">Détails</span>

  <!-- nav pane -->
  <div class="a" style="left:84.5px;top:75px;width:0.8px;height:252px;background:#262626"></div>
  <div class="a" style="left:79px;top:84.7px;width:1.3px;height:158px;background:#8a8a8a;border-radius:1px"></div>
  <div class="a" style="left:1.5px;top:148.3px;width:72.5px;height:16.7px;background:#2d2d2d;border-radius:3px"></div>
<div class="a" style="left:5px;top:139.5px;width:65px;height:0.8px;background:#2e2e2e"></div>
<svg class="a" style="left:6.5px;top:119.5px" width="4" height="6" viewBox="0 0 4 6"><path d="M0.8 0.5L3.2 3L0.8 5.5" stroke="#9a9a9a" stroke-width="0.7" fill="none"/></svg>
<svg class="a" style="left:17.7px;top:83.5px" width="9" height="9" viewBox="0 0 9 9"><path d="M0.5 4L4.5 0.5L8.5 4V8.5H0.5Z" fill="#f3a35b"/><rect x="3.3" y="5" width="2.4" height="3.5" fill="#d46a32"/></svg>
<div class="nv" style="top:83.75px">Accueil</div>
<svg class="a" style="left:17.7px;top:100.9px" width="9" height="9" viewBox="0 0 9 9"><rect x="0.5" y="0.5" width="8" height="8" rx="1" fill="#2f8de4"/><path d="M1 8L4 4.5L6 6.5L8 5V8Z" fill="#e8f4ff"/></svg>
<div class="nv" style="top:101.15px">Galerie</div>
<svg class="a" style="left:17.7px;top:118.0px" width="9" height="9" viewBox="0 0 9 9"><path d="M1.5 7.5A1.8 1.8 0 0 1 1.8 4A2.8 2.8 0 0 1 7 3.5A2 2 0 0 1 8.2 7.5Z" fill="#2a8af0"/></svg>
<div class="nv" style="top:118.25px">Tifani : personne</div>
<svg class="a" style="left:17.7px;top:152.1px" width="9" height="9" viewBox="0 0 9 9"><rect x="0.3" y="1" width="8.4" height="6.5" rx="0.8" fill="#3ba3e8"/><rect x="0.3" y="6.5" width="8.4" height="1" fill="#1a6cb0"/></svg>
<div class="nv" style="top:152.35px">Bureau</div>
<svg class="a" style="left:66.5px;top:153.6px" width="6" height="6" viewBox="0 0 6 6"><path d="M3.5 0.5L5.5 2.5L4.5 3L3 4.5L1 2.5L2.5 1.5Z M2 3.5L0.3 5.7" fill="#bdbdbd" stroke="#bdbdbd" stroke-width="0.4"/></svg>
<svg class="a" style="left:17.7px;top:169.3px" width="9" height="9" viewBox="0 0 9 9"><path d="M4.5 0.5V6M2 3.5L4.5 6L7 3.5M0.8 8.3H8.2" stroke="#3cc59a" stroke-width="0.9" fill="none"/></svg>
<div class="nv" style="top:169.55px">Téléchargem</div>
<svg class="a" style="left:66.5px;top:170.8px" width="6" height="6" viewBox="0 0 6 6"><path d="M3.5 0.5L5.5 2.5L4.5 3L3 4.5L1 2.5L2.5 1.5Z M2 3.5L0.3 5.7" fill="#bdbdbd" stroke="#bdbdbd" stroke-width="0.4"/></svg>
<svg class="a" style="left:17.7px;top:186.5px" width="9" height="9" viewBox="0 0 9 9"><rect x="1" y="0.5" width="7" height="8" rx="0.8" fill="#a9b9d6"/><rect x="2.5" y="2.5" width="4" height="0.7" fill="#5d6e8e"/><rect x="2.5" y="4.5" width="4" height="0.7" fill="#5d6e8e"/></svg>
<div class="nv" style="top:186.75px">Documents</div>
<svg class="a" style="left:66.5px;top:188.0px" width="6" height="6" viewBox="0 0 6 6"><path d="M3.5 0.5L5.5 2.5L4.5 3L3 4.5L1 2.5L2.5 1.5Z M2 3.5L0.3 5.7" fill="#bdbdbd" stroke="#bdbdbd" stroke-width="0.4"/></svg>
<svg class="a" style="left:17.7px;top:203.9px" width="9" height="9" viewBox="0 0 9 9"><rect x="0.5" y="0.5" width="8" height="8" rx="0.8" fill="#2a8af0"/><path d="M1 8L4 4.5L6 6.5L8 5V8Z" fill="#dff0ff"/></svg>
<div class="nv" style="top:204.15px">Images</div>
<svg class="a" style="left:66.5px;top:205.4px" width="6" height="6" viewBox="0 0 6 6"><path d="M3.5 0.5L5.5 2.5L4.5 3L3 4.5L1 2.5L2.5 1.5Z M2 3.5L0.3 5.7" fill="#bdbdbd" stroke="#bdbdbd" stroke-width="0.4"/></svg>
<svg class="a" style="left:17.7px;top:220.5px" width="9" height="9" viewBox="0 0 9 9"><defs><linearGradient id="mg" x1="0" y1="0" x2="1" y2="1"><stop offset="0" stop-color="#f39a4a"/><stop offset="1" stop-color="#d2508a"/></linearGradient></defs><circle cx="4.5" cy="4.5" r="4" fill="url(#mg)"/><path d="M4 6.5V2.3L6 1.8" stroke="#fff" stroke-width="0.7" fill="none"/><circle cx="3.4" cy="6.3" r="0.9" fill="#fff"/></svg>
<div class="nv" style="top:220.75px">Musique</div>
<svg class="a" style="left:66.5px;top:222.0px" width="6" height="6" viewBox="0 0 6 6"><path d="M3.5 0.5L5.5 2.5L4.5 3L3 4.5L1 2.5L2.5 1.5Z M2 3.5L0.3 5.7" fill="#bdbdbd" stroke="#bdbdbd" stroke-width="0.4"/></svg>
<svg class="a" style="left:17.7px;top:237.9px" width="9" height="9" viewBox="0 0 9 9"><rect x="0.5" y="0.5" width="8" height="8" rx="1" fill="#8a4fe0"/><path d="M3.3 2.5L6.5 4.5L3.3 6.5Z" fill="#fff"/></svg>
<div class="nv" style="top:238.15px">Vidéos</div>
<svg class="a" style="left:66.5px;top:239.4px" width="6" height="6" viewBox="0 0 6 6"><path d="M3.5 0.5L5.5 2.5L4.5 3L3 4.5L1 2.5L2.5 1.5Z M2 3.5L0.3 5.7" fill="#bdbdbd" stroke="#bdbdbd" stroke-width="0.4"/></svg>
<svg class="a" style="left:17.7px;top:255.2px" width="9" height="9" viewBox="0 0 9 9"><path d="M0 1.5A1 1 0 0 1 1 0.5H3.5L4.5 1.5H8A1 1 0 0 1 9 2.5V7.5A1 1 0 0 1 8 8.5H1A1 1 0 0 1 0 7.5Z" fill="#eeb63a"/><path d="M0 2.8H9V7.5A1 1 0 0 1 8 8.5H1A1 1 0 0 1 0 7.5Z" fill="#ffd45c"/></svg>
<div class="nv" style="top:255.45px">UA10_AppMusi</div>
<svg class="a" style="left:17.7px;top:272.2px" width="9" height="9" viewBox="0 0 9 9"><path d="M0 1.5A1 1 0 0 1 1 0.5H3.5L4.5 1.5H8A1 1 0 0 1 9 2.5V7.5A1 1 0 0 1 8 8.5H1A1 1 0 0 1 0 7.5Z" fill="#eeb63a"/><path d="M0 2.8H9V7.5A1 1 0 0 1 8 8.5H1A1 1 0 0 1 0 7.5Z" fill="#ffd45c"/></svg>
<div class="nv" style="top:272.45px">COURS</div>
<svg class="a" style="left:17.7px;top:289.0px" width="9" height="9" viewBox="0 0 9 9"><path d="M0 1.5A1 1 0 0 1 1 0.5H3.5L4.5 1.5H8A1 1 0 0 1 9 2.5V7.5A1 1 0 0 1 8 8.5H1A1 1 0 0 1 0 7.5Z" fill="#eeb63a"/><path d="M0 2.8H9V7.5A1 1 0 0 1 8 8.5H1A1 1 0 0 1 0 7.5Z" fill="#ffd45c"/></svg>
<div class="nv" style="top:289.25px">BDRG</div>
<svg class="a" style="left:17.7px;top:306.5px" width="9" height="9" viewBox="0 0 9 9"><path d="M0 1.5A1 1 0 0 1 1 0.5H3.5L4.5 1.5H8A1 1 0 0 1 9 2.5V7.5A1 1 0 0 1 8 8.5H1A1 1 0 0 1 0 7.5Z" fill="#eeb63a"/><path d="M0 2.8H9V7.5A1 1 0 0 1 8 8.5H1A1 1 0 0 1 0 7.5Z" fill="#ffd45c"/></svg>
<div class="nv" style="top:306.75px">AI_AgencyMast</div>
  <!-- items -->
<div class="it" style="left:93.60px;top:79.60px;height:69.30px"></div>
<div class="a" style="left:96.00px;top:101.90px;width:49.20px;height:28.10px;overflow:hidden"><svg width="49.2" height="28.1" viewBox="0 0 49.2 28.1" style="position:absolute;left:0;top:0"><defs><linearGradient id="g00" x1="0" x2="1"><stop offset="0" stop-color="#b4b8bc"/><stop offset="0.45" stop-color="#d4d7da"/><stop offset="1" stop-color="#a9adb1"/></linearGradient></defs><rect width="49.200000000000045" height="28.100000000000023" fill="url(#g00)"/><ellipse cx="24.5" cy="5" rx="5.5" ry="1.3" fill="#0d0d0d"/><path d="M21 5L21.5 1H27.5L28 5Z" fill="#0d0d0d"/><rect x="22.5" y="6" width="4" height="3" fill="#8a7468"/><path d="M11 13C13 10 19 9 24 9.5C29 9 34 10 36 13L37 26H34L33 15L16 14L13 14Z" fill="#111"/><rect x="17" y="12" width="14" height="16" fill="#f2f2f2"/><rect x="21.5" y="17" width="4" height="0.8" fill="#d79a5a"/><rect x="27" y="23" width="1.5" height="2.5" fill="#c84a4a"/></svg></div>
<div class="lb" style="left:93.60px;top:131.50px">06a319b4279d.we</div>
<div class="lb" style="left:93.60px;top:139.80px">bp</div>
<div class="it" style="left:156.90px;top:79.60px;height:85.90px"></div>
<div class="a" style="left:165.00px;top:81.30px;width:37.60px;height:48.70px;overflow:hidden"><svg width="37.6" height="48.7" viewBox="0 0 37.6 48.7" style="position:absolute;left:0;top:0"><rect width="37.60000000000002" height="48.69999999999999" fill="#f3f3f3"/><path d="M13 12C13 2 25 2 25 12" stroke="#b9b08a" stroke-width="1.2" fill="none"/><rect x="6.00" y="12" width="3.72" height="21.5" fill="#e9a07a"/><rect x="9.72" y="12" width="3.72" height="21.5" fill="#f1c49b"/><rect x="13.44" y="12" width="3.72" height="21.5" fill="#ec7f62"/><rect x="17.16" y="12" width="3.72" height="21.5" fill="#d8d2c4"/><rect x="20.88" y="12" width="3.72" height="21.5" fill="#a8b8a4"/><rect x="24.60" y="12" width="3.72" height="21.5" fill="#f0e08a"/><rect x="28.32" y="12" width="3.72" height="21.5" fill="#e8c85a"/><rect x="6" y="19" width="26" height="1.3" fill="#8a3a36"/><rect x="6" y="20.3" width="26" height="4.2" fill="#e8d060"/><rect x="10" y="21.6" width="18" height="1.6" fill="#4a3a2a"/><rect x="6" y="24.5" width="26" height="1.2" fill="#8a3a36"/></svg></div>
<div class="lb" style="left:156.90px;top:131.50px">513_Dior_Book_T</div>
<div class="lb" style="left:156.90px;top:139.80px">ote_Large_Multic</div>
<div class="lb" style="left:156.90px;top:148.10px">olor_Canvas_1.jp</div>
<div class="lb" style="left:156.90px;top:156.40px">g</div>
<div class="it" style="left:220.20px;top:79.60px;height:77.60px;background:#747474"></div>
<div class="a" style="left:223.00px;top:97.40px;width:48.00px;height:32.60px;overflow:hidden"><svg width="48.0" height="32.6" viewBox="0 0 48.0 32.6" style="position:absolute;left:0;top:0"><rect width="48" height="32.60000000000002" fill="#f3f3f5"/><path d="M12.5 10L15 9.5L19 13L21 18L28 20.5L29 23H12Z" fill="#a6aab2"/><path d="M12 20H29L28.5 23.5H12.5Z" fill="#e4e2dc"/><rect x="17" y="21.3" width="10" height="0.9" fill="#c7a676"/><rect x="13" y="21" width="2.5" height="1.8" fill="#222"/></svg></div>
<div class="lb" style="left:220.20px;top:131.50px">1592293527_3SH1</div>
<div class="lb" style="left:220.20px;top:139.80px">18YJP_H069_E02_</div>
<div class="lb" style="left:220.20px;top:148.10px">ZH.webp</div>
<div class="it" style="left:283.50px;top:79.60px;height:77.60px"></div>
<div class="a" style="left:287.00px;top:81.60px;width:45.00px;height:48.40px;overflow:hidden"><svg width="45.0" height="48.4" viewBox="0 0 45.0 48.4" style="position:absolute;left:0;top:0"><rect width="45" height="48.39999999999998" fill="#f2f2f4"/><path d="M17.5 17C17.5 8.5 27.5 8.5 27.5 17" stroke="#3a3a3a" stroke-width="1.8" fill="none"/><rect x="12.5" y="16" width="20" height="19" rx="1" fill="#0e0e0e"/><g stroke="#444" stroke-width="0.5"><path d="M13 21H32M13 25H32M13 29H32"/></g><circle cx="18.3" cy="18.5" r="1.3" fill="#b8a478"/><circle cx="27" cy="18.5" r="1.3" fill="#b8a478"/><circle cx="27.5" cy="22.5" r="1.8" fill="#a89468"/></svg></div>
<div class="lb" style="left:283.50px;top:131.50px">1604925908_M05</div>
<div class="lb" style="left:283.50px;top:139.80px">65OWCB_M900_E</div>
<div class="lb" style="left:283.50px;top:148.10px">01_GHC.webp</div>
<div class="it" style="left:346.80px;top:79.60px;height:77.60px"></div>
<div class="a" style="left:351.00px;top:81.60px;width:45.20px;height:48.40px;overflow:hidden"><svg width="45.2" height="48.4" viewBox="0 0 45.2 48.4" style="position:absolute;left:0;top:0"><rect width="45.200000000000045" height="48.39999999999998" fill="#f2f2f4"/><defs><clipPath id="c04"><path d="M7 18C7 13.5 9.5 12.6 13 12.6C17 12.6 19 13.2 20 15.5L27.5 15.3C29 15.3 29.5 16.5 29.5 18L30 24.5L38 24V28L30 29.5L22 30L17 35C10 35.5 6.5 31 7 18Z"/></clipPath></defs><g clip-path="url(#c04)"><rect x="5" y="10" width="35" height="27" fill="#4a4849"/><rect x="17.8" y="24.9" width="1.7" height="1.1" fill="#9a9696"/><rect x="10.8" y="23.8" width="1.4" height="1.4" fill="#d8d4d2"/><rect x="17.6" y="15.3" width="1.2" height="1.5" fill="#d8d4d2"/><rect x="21.5" y="21.1" width="1.1" height="1.3" fill="#9a9696"/><rect x="22.2" y="31.1" width="0.7" height="0.6" fill="#9a9696"/><rect x="21.6" y="29.9" width="1.0" height="1.2" fill="#9a9696"/><rect x="19.5" y="26.7" width="1.2" height="1.3" fill="#c0bcba"/><rect x="23.0" y="21.4" width="1.3" height="1.5" fill="#d8d4d2"/><rect x="24.4" y="19.3" width="0.9" height="0.9" fill="#d8d4d2"/><rect x="20.6" y="14.5" width="0.7" height="0.9" fill="#d8d4d2"/><rect x="30.9" y="31.5" width="0.6" height="0.8" fill="#d8d4d2"/><rect x="18.2" y="34.5" width="1.1" height="0.7" fill="#9a9696"/><rect x="26.2" y="18.2" width="0.7" height="0.9" fill="#c0bcba"/><rect x="25.7" y="14.7" width="0.9" height="0.7" fill="#d8d4d2"/><rect x="18.1" y="23.2" width="1.4" height="0.8" fill="#9a9696"/><rect x="31.6" y="29.7" width="1.1" height="1.0" fill="#c0bcba"/><rect x="16.9" y="16.9" width="0.9" height="1.6" fill="#2a2a2a"/><rect x="31.9" y="12.5" width="0.8" height="1.6" fill="#d8d4d2"/><rect x="7.1" y="15.4" width="1.1" height="0.6" fill="#2a2a2a"/><rect x="27.6" y="20.9" width="0.7" height="0.8" fill="#9a9696"/><rect x="6.4" y="20.5" width="1.3" height="0.7" fill="#c0bcba"/><rect x="27.6" y="15.1" width="1.1" height="1.2" fill="#2a2a2a"/><rect x="29.6" y="30.8" width="0.9" height="0.8" fill="#9a9696"/><rect x="23.9" y="20.9" width="1.2" height="0.7" fill="#d8d4d2"/><rect x="8.7" y="12.9" width="1.8" height="0.8" fill="#c0bcba"/><rect x="12.7" y="30.9" width="1.3" height="0.9" fill="#9a9696"/><rect x="30.2" y="34.5" width="0.8" height="1.1" fill="#d8d4d2"/><rect x="13.3" y="33.1" width="0.8" height="0.6" fill="#2a2a2a"/><rect x="16.7" y="17.7" width="0.7" height="0.9" fill="#9a9696"/><rect x="8.4" y="15.2" width="1.1" height="0.9" fill="#9a9696"/><rect x="21.3" y="33.2" width="1.2" height="1.0" fill="#2a2a2a"/><rect x="31.0" y="12.5" width="1.4" height="1.1" fill="#2a2a2a"/><rect x="14.3" y="35.0" width="0.7" height="1.1" fill="#d8d4d2"/><rect x="29.4" y="29.0" width="1.4" height="1.4" fill="#2a2a2a"/><rect x="15.1" y="27.8" width="1.7" height="1.5" fill="#c0bcba"/><rect x="30.6" y="12.7" width="1.2" height="0.6" fill="#c0bcba"/><rect x="15.9" y="12.3" width="0.7" height="0.7" fill="#d8d4d2"/><rect x="31.8" y="32.2" width="1.5" height="1.0" fill="#c0bcba"/><rect x="17.5" y="31.3" width="0.7" height="1.4" fill="#d8d4d2"/><rect x="14.1" y="14.0" width="0.6" height="1.6" fill="#d8d4d2"/><rect x="18.9" y="26.1" width="1.7" height="0.9" fill="#d8d4d2"/><rect x="15.6" y="15.3" width="1.3" height="1.1" fill="#2a2a2a"/><rect x="23.2" y="22.2" width="1.7" height="0.9" fill="#2a2a2a"/><rect x="11.2" y="21.9" width="1.6" height="1.5" fill="#9a9696"/><rect x="16.0" y="25.4" width="1.0" height="0.7" fill="#c0bcba"/><rect x="15.1" y="32.6" width="0.6" height="0.7" fill="#2a2a2a"/><rect x="27.4" y="14.6" width="1.2" height="1.5" fill="#c0bcba"/><rect x="15.9" y="24.0" width="1.4" height="1.3" fill="#c0bcba"/><rect x="14.3" y="31.1" width="0.9" height="1.2" fill="#2a2a2a"/><rect x="20.8" y="19.1" width="1.5" height="0.6" fill="#9a9696"/><rect x="16.5" y="16.4" width="1.5" height="0.9" fill="#9a9696"/><rect x="26.7" y="34.6" width="0.7" height="0.7" fill="#2a2a2a"/><rect x="30.9" y="27.7" width="0.8" height="1.1" fill="#9a9696"/><rect x="24.6" y="29.4" width="1.2" height="0.6" fill="#9a9696"/><rect x="13.1" y="20.0" width="1.4" height="1.1" fill="#9a9696"/><rect x="16.2" y="30.2" width="1.7" height="0.7" fill="#c0bcba"/><rect x="9.4" y="22.4" width="1.4" height="1.5" fill="#c0bcba"/><rect x="20.3" y="27.0" width="1.2" height="1.4" fill="#2a2a2a"/><rect x="18.1" y="27.0" width="0.8" height="1.3" fill="#d8d4d2"/><rect x="11.5" y="32.7" width="1.8" height="1.6" fill="#2a2a2a"/><rect x="12.8" y="28.5" width="0.6" height="1.1" fill="#d8d4d2"/><rect x="17.5" y="24.7" width="1.5" height="1.1" fill="#d8d4d2"/><rect x="11.7" y="32.0" width="1.1" height="0.6" fill="#2a2a2a"/><rect x="23.9" y="33.1" width="1.2" height="1.6" fill="#c0bcba"/><rect x="30.6" y="23.3" width="1.7" height="0.7" fill="#9a9696"/><rect x="17.4" y="24.9" width="1.6" height="1.2" fill="#9a9696"/><rect x="19.6" y="31.4" width="1.3" height="0.9" fill="#c0bcba"/><rect x="30.8" y="32.0" width="1.3" height="0.9" fill="#9a9696"/><rect x="31.2" y="24.1" width="1.3" height="0.8" fill="#d8d4d2"/><rect x="19.1" y="25.9" width="0.6" height="1.6" fill="#c0bcba"/><rect x="20.1" y="34.8" width="0.7" height="0.7" fill="#9a9696"/><rect x="7.7" y="24.4" width="1.1" height="1.6" fill="#c0bcba"/><rect x="13.0" y="22.9" width="0.8" height="1.0" fill="#c0bcba"/><rect x="19.6" y="14.5" width="1.1" height="0.6" fill="#2a2a2a"/><rect x="9.4" y="29.9" width="0.6" height="0.8" fill="#9a9696"/><rect x="6.3" y="18.5" width="1.5" height="0.8" fill="#c0bcba"/><rect x="8.7" y="28.8" width="0.7" height="1.1" fill="#2a2a2a"/><rect x="24.7" y="28.1" width="1.7" height="0.6" fill="#c0bcba"/><rect x="27.5" y="26.2" width="1.2" height="1.5" fill="#9a9696"/><rect x="19.8" y="31.6" width="1.3" height="1.5" fill="#9a9696"/><rect x="29.8" y="26.4" width="1.0" height="0.8" fill="#2a2a2a"/><rect x="29.2" y="16.5" width="1.5" height="0.8" fill="#d8d4d2"/><rect x="9.5" y="17.5" width="1.5" height="0.9" fill="#d8d4d2"/><rect x="17.3" y="33.6" width="1.3" height="1.3" fill="#9a9696"/><rect x="16.5" y="27.8" width="0.6" height="0.8" fill="#2a2a2a"/><rect x="29.7" y="34.3" width="0.7" height="1.1" fill="#2a2a2a"/><rect x="19.1" y="27.8" width="0.8" height="0.7" fill="#d8d4d2"/><rect x="6.6" y="29.5" width="1.3" height="1.5" fill="#c0bcba"/><rect x="9.8" y="16.2" width="0.8" height="1.4" fill="#2a2a2a"/><rect x="30.1" y="14.2" width="0.7" height="1.6" fill="#c0bcba"/><path d="M11 14C13 20 13 28 12 34M20 15L21 28" stroke="#1a1a1a" stroke-width="2" fill="none"/><rect x="30" y="23.5" width="9" height="6" fill="#151515"/></g></svg></div>
<div class="lb" style="left:346.80px;top:131.50px">1623314781_1AD</div>
<div class="lb" style="left:346.80px;top:139.80px">PO093YKY_H28E_</div>
<div class="lb" style="left:346.80px;top:148.10px">E01_GHC.webp</div>
<div class="it" style="left:410.10px;top:79.60px;height:77.60px"></div>
<div class="a" style="left:414.60px;top:81.60px;width:44.50px;height:48.40px;overflow:hidden"><svg width="44.5" height="48.4" viewBox="0 0 44.5 48.4" style="position:absolute;left:0;top:0"><rect width="44.5" height="48.39999999999998" fill="#f2f2f4"/><path d="M16 17C16 6 25 6 25 17" stroke="#d9d0c0" stroke-width="1.4" fill="none"/><path d="M9.5 16.7H36.3L36.8 40H9Z" fill="#e9ddd0"/><circle cx="25.9" cy="33.7" r="1.26" fill="#d0543a" opacity="0.85"/><circle cx="29.8" cy="22.6" r="1.31" fill="#d0543a" opacity="0.85"/><circle cx="12.9" cy="27.6" r="0.84" fill="#c9b89a" opacity="0.85"/><circle cx="12.6" cy="22.6" r="0.87" fill="#c9b89a" opacity="0.85"/><circle cx="14.6" cy="36.5" r="0.64" fill="#f0e8dc" opacity="0.85"/><circle cx="30.3" cy="20.1" r="0.61" fill="#d96a50" opacity="0.85"/><circle cx="10.0" cy="36.6" r="1.20" fill="#c9b89a" opacity="0.85"/><circle cx="34.5" cy="20.7" r="0.76" fill="#3a8a8a" opacity="0.85"/><circle cx="34.5" cy="29.1" r="0.66" fill="#c9b89a" opacity="0.85"/><circle cx="34.7" cy="21.4" r="0.77" fill="#f0e8dc" opacity="0.85"/><circle cx="19.2" cy="20.7" r="0.74" fill="#3a8a8a" opacity="0.85"/><circle cx="18.5" cy="35.4" r="1.04" fill="#d0543a" opacity="0.85"/><circle cx="28.0" cy="18.5" r="1.24" fill="#e6c080" opacity="0.85"/><circle cx="22.3" cy="24.1" r="0.93" fill="#d96a50" opacity="0.85"/><circle cx="14.5" cy="22.8" r="1.35" fill="#d0543a" opacity="0.85"/><circle cx="19.1" cy="26.1" r="0.83" fill="#f0e8dc" opacity="0.85"/><circle cx="24.8" cy="17.2" r="1.14" fill="#d0543a" opacity="0.85"/><circle cx="25.9" cy="38.5" r="1.18" fill="#e08a5a" opacity="0.85"/><circle cx="33.7" cy="38.2" r="0.96" fill="#e6c080" opacity="0.85"/><circle cx="32.8" cy="22.6" r="0.60" fill="#d96a50" opacity="0.85"/><circle cx="29.1" cy="34.9" r="0.53" fill="#a83a2a" opacity="0.85"/><circle cx="34.1" cy="19.1" r="0.96" fill="#e6c080" opacity="0.85"/><circle cx="19.2" cy="20.3" r="1.33" fill="#a83a2a" opacity="0.85"/><circle cx="23.9" cy="24.0" r="0.78" fill="#e6c080" opacity="0.85"/><circle cx="30.4" cy="31.1" r="1.40" fill="#a83a2a" opacity="0.85"/><circle cx="14.1" cy="18.1" r="0.53" fill="#f0e8dc" opacity="0.85"/><circle cx="28.9" cy="24.7" r="0.91" fill="#a83a2a" opacity="0.85"/><circle cx="20.8" cy="18.3" r="1.22" fill="#d0543a" opacity="0.85"/><circle cx="18.5" cy="21.7" r="1.07" fill="#3a8a8a" opacity="0.85"/><circle cx="30.1" cy="19.4" r="0.84" fill="#f0e8dc" opacity="0.85"/><circle cx="11.5" cy="26.5" r="0.91" fill="#3a8a8a" opacity="0.85"/><circle cx="35.5" cy="36.2" r="1.36" fill="#d96a50" opacity="0.85"/><circle cx="27.6" cy="24.1" r="0.76" fill="#a83a2a" opacity="0.85"/><circle cx="20.3" cy="20.3" r="1.24" fill="#f0e8dc" opacity="0.85"/><circle cx="23.6" cy="21.0" r="1.28" fill="#d96a50" opacity="0.85"/><circle cx="14.6" cy="28.1" r="0.56" fill="#e6c080" opacity="0.85"/><circle cx="30.3" cy="25.0" r="1.18" fill="#d0543a" opacity="0.85"/><circle cx="19.3" cy="32.9" r="1.25" fill="#a83a2a" opacity="0.85"/><circle cx="16.8" cy="39.1" r="1.36" fill="#a83a2a" opacity="0.85"/><circle cx="18.7" cy="21.0" r="0.93" fill="#d0543a" opacity="0.85"/><circle cx="29.7" cy="24.3" r="0.92" fill="#a83a2a" opacity="0.85"/><circle cx="30.8" cy="31.6" r="0.81" fill="#e6c080" opacity="0.85"/><circle cx="26.4" cy="33.6" r="0.82" fill="#f0e8dc" opacity="0.85"/><circle cx="31.5" cy="36.6" r="1.38" fill="#d96a50" opacity="0.85"/><circle cx="34.4" cy="28.7" r="0.68" fill="#3a8a8a" opacity="0.85"/><circle cx="19.2" cy="36.2" r="1.12" fill="#a83a2a" opacity="0.85"/><circle cx="28.4" cy="33.4" r="1.06" fill="#3a8a8a" opacity="0.85"/><circle cx="33.9" cy="28.6" r="0.77" fill="#f0e8dc" opacity="0.85"/><circle cx="24.1" cy="36.5" r="1.15" fill="#a83a2a" opacity="0.85"/><circle cx="10.7" cy="20.6" r="1.06" fill="#d96a50" opacity="0.85"/><circle cx="14.6" cy="34.1" r="1.07" fill="#3a8a8a" opacity="0.85"/><circle cx="11.1" cy="27.6" r="0.65" fill="#c9b89a" opacity="0.85"/><circle cx="32.7" cy="19.5" r="0.93" fill="#3a8a8a" opacity="0.85"/><circle cx="24.0" cy="26.3" r="0.84" fill="#e6c080" opacity="0.85"/><circle cx="25.6" cy="30.3" r="1.15" fill="#c9b89a" opacity="0.85"/><circle cx="19.5" cy="24.9" r="1.27" fill="#a83a2a" opacity="0.85"/><circle cx="32.1" cy="32.5" r="1.37" fill="#e6c080" opacity="0.85"/><circle cx="24.0" cy="23.8" r="0.99" fill="#a83a2a" opacity="0.85"/><circle cx="18.7" cy="30.1" r="1.24" fill="#e6c080" opacity="0.85"/><circle cx="20.7" cy="35.3" r="0.92" fill="#e6c080" opacity="0.85"/><circle cx="14.0" cy="25.6" r="1.36" fill="#d96a50" opacity="0.85"/><circle cx="34.7" cy="30.7" r="1.24" fill="#e6c080" opacity="0.85"/><circle cx="26.9" cy="25.6" r="1.01" fill="#e6c080" opacity="0.85"/><circle cx="25.7" cy="20.2" r="0.89" fill="#f0e8dc" opacity="0.85"/><circle cx="34.9" cy="28.1" r="1.38" fill="#d96a50" opacity="0.85"/><circle cx="19.7" cy="38.6" r="1.04" fill="#3a8a8a" opacity="0.85"/><circle cx="16.6" cy="39.1" r="0.73" fill="#d96a50" opacity="0.85"/><circle cx="10.5" cy="38.3" r="0.94" fill="#a83a2a" opacity="0.85"/><circle cx="17.3" cy="27.7" r="1.09" fill="#e08a5a" opacity="0.85"/><circle cx="34.5" cy="22.5" r="1.20" fill="#d0543a" opacity="0.85"/><circle cx="31.1" cy="17.3" r="0.72" fill="#a83a2a" opacity="0.85"/><circle cx="22.1" cy="17.8" r="0.74" fill="#d96a50" opacity="0.85"/><circle cx="13.9" cy="39.2" r="0.94" fill="#a83a2a" opacity="0.85"/><circle cx="35.3" cy="28.7" r="0.51" fill="#e08a5a" opacity="0.85"/><circle cx="13.2" cy="23.4" r="1.05" fill="#e6c080" opacity="0.85"/><circle cx="28.6" cy="17.6" r="0.82" fill="#e6c080" opacity="0.85"/><circle cx="29.0" cy="30.3" r="0.50" fill="#d0543a" opacity="0.85"/><circle cx="24.1" cy="32.4" r="1.30" fill="#e08a5a" opacity="0.85"/><circle cx="23.9" cy="17.3" r="1.04" fill="#f0e8dc" opacity="0.85"/><circle cx="27.6" cy="38.4" r="1.27" fill="#d96a50" opacity="0.85"/><circle cx="31.5" cy="27.7" r="1.31" fill="#c9b89a" opacity="0.85"/><circle cx="21.9" cy="34.1" r="1.25" fill="#a83a2a" opacity="0.85"/><circle cx="27.7" cy="26.7" r="1.08" fill="#a83a2a" opacity="0.85"/><circle cx="22.0" cy="24.0" r="0.93" fill="#3a8a8a" opacity="0.85"/><circle cx="24.0" cy="28.2" r="0.98" fill="#e6c080" opacity="0.85"/><circle cx="20.9" cy="29.2" r="0.56" fill="#d0543a" opacity="0.85"/><circle cx="15.9" cy="35.4" r="1.10" fill="#e08a5a" opacity="0.85"/><circle cx="10.7" cy="33.3" r="1.40" fill="#e08a5a" opacity="0.85"/><circle cx="27.9" cy="18.1" r="0.70" fill="#e08a5a" opacity="0.85"/><circle cx="26.5" cy="38.4" r="1.39" fill="#3a8a8a" opacity="0.85"/><circle cx="28.0" cy="26.9" r="1.05" fill="#3a8a8a" opacity="0.85"/><circle cx="20.6" cy="20.6" r="0.54" fill="#c9b89a" opacity="0.85"/><circle cx="12.8" cy="25.5" r="0.75" fill="#e08a5a" opacity="0.85"/><circle cx="24.6" cy="19.7" r="1.29" fill="#f0e8dc" opacity="0.85"/><circle cx="13.4" cy="26.7" r="1.12" fill="#e6c080" opacity="0.85"/><circle cx="22.5" cy="25.0" r="1.32" fill="#e6c080" opacity="0.85"/><circle cx="13.5" cy="23.6" r="1.32" fill="#a83a2a" opacity="0.85"/><circle cx="24.1" cy="31.0" r="0.56" fill="#a83a2a" opacity="0.85"/><circle cx="16.0" cy="35.7" r="0.97" fill="#a83a2a" opacity="0.85"/><circle cx="13.4" cy="22.3" r="0.91" fill="#e6c080" opacity="0.85"/><circle cx="19.9" cy="20.0" r="1.09" fill="#d0543a" opacity="0.85"/><circle cx="12.2" cy="32.0" r="1.28" fill="#e08a5a" opacity="0.85"/><circle cx="22.9" cy="27.2" r="1.29" fill="#f0e8dc" opacity="0.85"/><circle cx="22.3" cy="24.3" r="0.99" fill="#d0543a" opacity="0.85"/><circle cx="19.8" cy="36.1" r="1.11" fill="#f0e8dc" opacity="0.85"/><circle cx="15.7" cy="19.6" r="1.24" fill="#d96a50" opacity="0.85"/><circle cx="13.6" cy="31.1" r="1.25" fill="#e6c080" opacity="0.85"/><circle cx="17.4" cy="37.9" r="1.22" fill="#e6c080" opacity="0.85"/><circle cx="19.6" cy="33.3" r="1.08" fill="#e6c080" opacity="0.85"/><circle cx="30.5" cy="26.8" r="0.97" fill="#e6c080" opacity="0.85"/><rect x="9.3" y="24.3" width="27" height="1" fill="#9a3a2a"/><rect x="9.3" y="25.3" width="27" height="4" fill="#2e8a96"/><rect x="13" y="26.8" width="19" height="1" fill="#1f5a62"/><rect x="9.3" y="29.3" width="27" height="1" fill="#9a3a2a"/></svg></div>
<div class="lb" style="left:410.10px;top:131.50px">1630320322_M12</div>
<div class="lb" style="left:410.10px;top:139.80px">86ZRHP_M941_E</div>
<div class="lb" style="left:410.10px;top:148.10px">03_GHC.webp</div>
<div class="it" style="left:473.40px;top:79.60px;height:69.30px"></div>
<div class="a" style="left:475.70px;top:81.30px;width:49.20px;height:48.70px;overflow:hidden"><svg width="49.2" height="48.7" viewBox="0 0 49.2 48.7" style="position:absolute;left:0;top:0"><defs><radialGradient id="g06" cx="0.55" cy="0.4" r="0.75"><stop offset="0" stop-color="#c9c9c9"/><stop offset="0.6" stop-color="#9a9a9a"/><stop offset="1" stop-color="#6e6e6e"/></radialGradient></defs><rect width="49.19999999999993" height="48.69999999999999" fill="url(#g06)"/><path d="M28 20L40 12L36 26Z" fill="#d8d8d8" opacity="0.5"/><rect x="0" y="37" width="49.19999999999993" height="11" fill="#8a8a8a" opacity="0.6"/><rect x="13" y="4.7" width="21.6" height="38" fill="#e0d8c0" opacity="0.9"/><rect x="13.5" y="17.5" width="20.6" height="25" fill="#d4a844"/><rect x="18.7" y="5.5" width="11.8" height="12" fill="#1b1e34"/><rect x="22.5" y="17" width="4" height="20" fill="#141414"/><rect x="13.5" y="38" width="20.6" height="4.8" fill="#b88e3a"/></svg></div>
<div class="lb" style="left:473.40px;top:131.50px">3348901419130_4.</div>
<div class="lb" style="left:473.40px;top:139.80px">jpg</div>
<div class="it" style="left:536.70px;top:79.60px;height:77.60px"></div>
<div class="a" style="left:539.60px;top:98.90px;width:48.40px;height:31.10px;overflow:hidden"><svg width="48.4" height="31.1" viewBox="0 0 48.4 31.1" style="position:absolute;left:0;top:0"><defs><linearGradient id="g07" x1="0" y1="0" x2="0" y2="1"><stop offset="0" stop-color="#f4f4f4"/><stop offset="1" stop-color="#dedede"/></linearGradient></defs><rect width="48.39999999999998" height="31.100000000000023" fill="url(#g07)"/><rect x="15.2" y="7.6" width="9.5" height="16.4" fill="#2a2a2a"/><rect x="17" y="10.5" width="5" height="8" fill="none" stroke="#8a7a5a" stroke-width="0.5"/><rect x="24.5" y="7.6" width="10" height="16.4" fill="#e0c080" opacity="0.6"/><rect x="24.7" y="9" width="8" height="5" fill="#1a1a1a"/><rect x="25" y="14" width="8" height="9.5" fill="#d49a2e"/><rect x="28" y="13" width="2" height="10" fill="#141414"/></svg></div>
<div class="lb" style="left:536.70px;top:131.50px">Dior_DiorHomm</div>
<div class="lb" style="left:536.70px;top:139.80px">eParfum-pack.jp</div>
<div class="lb" style="left:536.70px;top:148.10px">eg</div>
<div class="it" style="left:93.60px;top:166.60px;height:61.00px"></div>
<div class="a" style="left:98.90px;top:168.00px;width:43.30px;height:48.60px;overflow:hidden"><svg width="43.3" height="48.6" viewBox="0 0 43.3 48.6" style="position:absolute;left:0;top:0"><rect width="43.30000000000007" height="48.60000000000002" fill="#efefef"/><rect x="4.6" y="5.8" width="18.2" height="32.8" fill="#c9cacd"/><rect x="4.6" y="5.8" width="3" height="32.8" fill="#dcdde0"/><rect x="5.6" y="10" width="14.4" height="7.8" fill="#222"/><rect x="22.8" y="7" width="15" height="31" fill="#e6e0cc" opacity="0.7"/><rect x="23" y="19.9" width="13.9" height="17.5" fill="#d2a642"/><rect x="20.4" y="10.5" width="5.8" height="5.5" fill="#111"/><rect x="21.7" y="16" width="2.9" height="20" fill="#1a1a1a"/></svg></div>
<div class="lb" style="left:93.60px;top:218.50px">img108103.jpg</div>
<div class="it" style="left:156.90px;top:166.60px;height:69.30px"></div>
<div class="a" style="left:159.80px;top:168.00px;width:48.10px;height:48.60px;overflow:hidden"><svg width="48.1" height="48.6" viewBox="0 0 48.1 48.6" style="position:absolute;left:0;top:0"><rect width="48.10000000000002" height="48.60000000000002" fill="#ffffff"/><rect x="10" y="22.2" width="15.8" height="16.4" fill="#f0ecf2" stroke="#d8d2de" stroke-width="0.5"/><rect x="12.5" y="27" width="10.5" height="3.5" fill="#a9a2b8"/><rect x="27" y="27" width="10.5" height="11" rx="1" fill="#efa7ae"/><rect x="29" y="30" width="6.5" height="3" fill="#f6d6da"/><rect x="29.5" y="22.7" width="5.5" height="4.5" fill="#bdb7b4"/></svg></div>
<div class="lb" style="left:156.90px;top:218.50px">miss-dior-eau-de</div>
<div class="lb" style="left:156.90px;top:226.80px">-parfum.jpg</div>
<div class="it" style="left:220.20px;top:166.60px;height:77.60px"></div>
<div class="a" style="left:231.90px;top:168.00px;width:30.20px;height:48.60px;overflow:hidden"><svg width="30.2" height="48.6" viewBox="0 0 30.2 48.6" style="position:absolute;left:0;top:0"><rect width="30.200000000000045" height="48.60000000000002" fill="#f4f4f4"/><circle cx="9" cy="24" r="11" fill="#1a1a1a"/><circle cx="10.5" cy="25.5" r="7.5" fill="#d9b08a"/><path d="M0 12C5 10 10 12 12 15L4 30L0 31Z" fill="#9a9a9a"/><rect x="16" y="20" width="5" height="18" fill="#8e8e8e"/><path d="M16.5 20V15C16.5 13.5 20 13 20 15V20Z" fill="#cc1a26"/><rect x="21" y="11" width="7.5" height="31" fill="#8a8a8a"/><rect x="21.5" y="11" width="6.5" height="12" fill="#b9b9b9"/></svg></div>
<div class="lb" style="left:220.20px;top:218.50px">p_2-launch-push</div>
<div class="lb" style="left:220.20px;top:226.80px">4_1440_1200.web</div>
<div class="lb" style="left:220.20px;top:235.10px">p</div>
<div class="it" style="left:283.50px;top:166.60px;height:69.30px"></div>
<div class="a" style="left:286.00px;top:184.30px;width:49.00px;height:32.30px;overflow:hidden"><svg width="49.0" height="32.3" viewBox="0 0 49.0 32.3" style="position:absolute;left:0;top:0"><defs><linearGradient id="g13" x1="0" y1="0" x2="1" y2="0.4"><stop offset="0" stop-color="#6e6ca0"/><stop offset="0.35" stop-color="#a8a6d0"/><stop offset="1" stop-color="#44446a"/></linearGradient></defs><rect width="49" height="32.30000000000001" fill="url(#g13)"/><path d="M2 25C6 18 14 15 20 17L22 27H2Z" fill="#5a587e"/><path d="M8 18C12 15 17 15 19 18" stroke="#8a88aa" stroke-width="1.5" fill="none"/><rect x="19.8" y="9" width="7" height="19" fill="#b6a0d4"/><rect x="21" y="5.3" width="4.6" height="4" fill="#1e1e2a"/><rect x="26" y="17" width="8.5" height="12" fill="#d6d2e0"/><path d="M34 20C38 18 42 19 45 22V27H34Z" fill="#4a4868"/><rect x="0" y="28" width="49" height="5" fill="#7c7aa0"/></svg></div>
<div class="lb" style="left:283.50px;top:218.50px">Y0840550_E02_Z</div>
<div class="lb" style="left:283.50px;top:226.80px">HC.jpg</div>
<div class="it" style="left:346.80px;top:166.60px;height:77.60px"></div>
<div class="a" style="left:349.80px;top:184.30px;width:48.20px;height:32.30px;overflow:hidden"><svg width="48.2" height="32.3" viewBox="0 0 48.2 32.3" style="position:absolute;left:0;top:0"><defs><linearGradient id="g14" x1="0" x2="1"><stop offset="0" stop-color="#e9ebed"/><stop offset="1" stop-color="#b3b7bb"/></linearGradient></defs><rect width="48.200000000000045" height="32.30000000000001" fill="url(#g14)"/><rect x="20" y="3.6" width="7.5" height="5.2" fill="#1a1a1a"/><rect x="19.6" y="8.8" width="8.3" height="17.6" fill="#f0d6aa"/><rect x="20" y="11" width="7.5" height="3" fill="#faf2e4"/><rect x="14.4" y="26.4" width="18.7" height="6" fill="#c7c9cb"/></svg></div>
<div class="lb" style="left:346.80px;top:218.50px">Y0996065_C09960</div>
<div class="lb" style="left:346.80px;top:226.80px">0579_E01_ZHC.jp</div>
<div class="lb" style="left:346.80px;top:235.10px">g</div>
<div class="it" style="left:410.10px;top:166.60px;height:77.60px"></div>
<div class="a" style="left:414.60px;top:168.00px;width:44.50px;height:48.60px;overflow:hidden"><svg width="44.5" height="48.6" viewBox="0 0 44.5 48.6" style="position:absolute;left:0;top:0"><rect width="44.5" height="48.60000000000002" fill="#ececee"/><circle cx="21.5" cy="6.5" r="3" fill="#f6f0e2" stroke="#d8c8a0" stroke-width="0.6"/><path d="M20 9.5C18 20 11 26 11.5 36C12 42 16 45 20 45C25 45 29.3 42 29.3 36C29.5 27 25 20 23 9.5Z" fill="#efe2c6"/><path d="M13 32C13 40 16 43 20 43C25 43 28 40 28 33C28 28 26 26 20.5 26C16 26 13 28 13 32Z" fill="#e4b04e"/><path d="M20.5 10V26" stroke="#caa050" stroke-width="0.8"/></svg></div>
<div class="lb" style="left:410.10px;top:218.50px">Y0996116_C09960</div>
<div class="lb" style="left:410.10px;top:226.80px">0555_E01_GHC.jp</div>
<div class="lb" style="left:410.10px;top:235.10px">g</div>
<div class="it" style="left:473.40px;top:166.60px;height:77.60px"></div>
<div class="a" style="left:478.00px;top:168.00px;width:44.00px;height:48.60px;overflow:hidden"><svg width="44.0" height="48.6" viewBox="0 0 44.0 48.6" style="position:absolute;left:0;top:0"><rect width="44" height="48.60000000000002" fill="#f0f0f2"/><rect x="11.8" y="8.1" width="18.7" height="32.9" fill="#efe4cc"/><rect x="12.5" y="18.1" width="17.3" height="20.5" fill="#d9a43c"/><rect x="17" y="8.1" width="8.8" height="9.4" fill="#141414"/><rect x="20" y="17.5" width="3" height="19.5" fill="#141414"/></svg></div>
<div class="lb" style="left:473.40px;top:218.50px">Y0996157_C09960</div>
<div class="lb" style="left:473.40px;top:226.80px">0157_E01_GHC.jp</div>
<div class="lb" style="left:473.40px;top:235.10px">g</div>
<div class="it" style="left:536.70px;top:166.60px;height:69.30px"></div>
<div class="a" style="left:539.60px;top:184.30px;width:48.40px;height:32.30px;overflow:hidden"><svg width="48.4" height="32.3" viewBox="0 0 48.4 32.3" style="position:absolute;left:0;top:0"><defs><linearGradient id="g17" x1="0" y1="0" x2="1" y2="1"><stop offset="0" stop-color="#ece8e2"/><stop offset="1" stop-color="#ddd0bc"/></linearGradient></defs><rect width="48.39999999999998" height="32.30000000000001" fill="url(#g17)"/><path d="M2 4C6 6 9 3 12 5M38 2C41 8 45 12 48 12M40 22C43 25 46 24 48 28M3 20C5 24 9 24 10 30" stroke="#c8a878" stroke-width="2" fill="none" opacity="0.5"/><g transform="rotate(15 27 16)"><rect x="19" y="4" width="16" height="27" fill="#d8c8a0" opacity="0.6"/><rect x="19.5" y="11" width="15" height="19" fill="#b88a30"/><rect x="22" y="3.5" width="8" height="7.5" fill="#1a1f3a"/><rect x="24.5" y="11" width="3" height="14" fill="#181818"/></g></svg></div>
<div class="lb" style="left:536.70px;top:218.50px">Y0996157_E02_Z</div>
<div class="lb" style="left:536.70px;top:226.80px">HC.jpg</div>
<div class="it" style="left:93.60px;top:245.90px;height:77.60px"></div>
<div class="a" style="left:97.90px;top:246.90px;width:44.90px;height:48.70px;overflow:hidden"><svg width="44.9" height="48.7" viewBox="0 0 44.9 48.7" style="position:absolute;left:0;top:0"><rect width="44.89999999999998" height="48.700000000000045" fill="#f0f0f2"/><rect x="10.9" y="7.7" width="8.2" height="12.3" fill="#101010"/><rect x="10.9" y="20" width="8.2" height="3.5" fill="#c8c8c8"/><rect x="10.9" y="23.5" width="8.2" height="17" fill="#cc1c22"/><path d="M29.3 9.4C31.5 11.5 31.8 14.5 29.3 16.4C26.8 14.5 27.2 11.5 29.3 9.4Z" fill="#c81a22"/><rect x="28.6" y="16" width="1.6" height="13" fill="#111"/><rect x="25" y="28.8" width="8.8" height="12.3" rx="1" fill="#111"/></svg></div>
<div class="lb" style="left:93.60px;top:297.80px">Y0996265_C02540</div>
<div class="lb" style="left:93.60px;top:306.10px">0999_E01_GHC.w</div>
<div class="lb" style="left:93.60px;top:314.40px">ebp</div>
<div class="it" style="left:156.90px;top:245.90px;height:77.60px"></div>
<div class="a" style="left:159.80px;top:263.30px;width:48.10px;height:32.30px;overflow:hidden"><svg width="48.1" height="32.3" viewBox="0 0 48.1 32.3" style="position:absolute;left:0;top:0"><rect width="48.10000000000002" height="32.30000000000001" fill="#f0f0f2"/><rect x="17.6" y="5.3" width="10.6" height="22.3" fill="#e6ecf2"/><rect x="18" y="11" width="9.8" height="16" fill="#b6cde8"/><path d="M20 12V26M25 12V26" stroke="#8fb0dc" stroke-width="0.8"/></svg></div>
<div class="lb" style="left:156.90px;top:297.80px">Y9190300_F09190</div>
<div class="lb" style="left:156.90px;top:306.10px">3009_E01_ZHC_fr</div>
<div class="lb" style="left:156.90px;top:314.40px">_FR.jpg</div>

  <!-- status -->
  <span class="t" style="left:7.8px;top:329.6px;font-size:6.4px;letter-spacing:-0.15px;color:#e4e4e4">18 élément(s)</span>
  <div class="a" style="left:51px;top:330px;width:0.8px;height:6px;background:#bbb"></div>
  <span class="t" style="left:56.9px;top:329.6px;font-size:6.4px;letter-spacing:-0.15px;color:#e4e4e4">18 éléments sélectionnés &nbsp;3,46 Mo</span>
  <div class="a" style="left:158.4px;top:330px;width:0.8px;height:6px;background:#bbb"></div>
  <div class="a" style="left:577.8px;top:328px;width:9px;height:9px;background:#6a6a6a;border-radius:1.5px"></div>
  <div class="a" style="left:579.3px;top:330.5px;width:6px;height:1.4px;background:#ddd"></div>
  <div class="a" style="left:579.3px;top:333.5px;width:6px;height:1.4px;background:#ddd"></div>
  <div class="a" style="left:588px;top:326.3px;width:12px;height:12.2px;background:#8a8a8a;border-radius:1.5px"></div>
  <div class="a" style="left:590.5px;top:329px;width:7px;height:6px;background:#fff;border:1px solid #555"></div>
</div>

<!-- DRAGTIP -->
<div class="a" style="left:305.2px;top:253.3px;width:54.8px;height:54.2px;background:#fff;border:1px solid #8c8c8c;border-radius:2.5px"></div>
<div class="a" style="left:312.4px;top:261.6px;width:33.6px;height:10.4px;background:#f6f6f6;border:0.5px solid #ececec;border-radius:2px"></div>
<svg class="a" style="left:315.5px;top:264.3px" width="6" height="6" viewBox="0 0 6 6"><path d="M3 0.3V5.7M0.3 3H5.7" stroke="#555" stroke-width="0.9"/></svg>
<span class="t" style="left:323.6px;top:264.5px;font-size:6.7px;color:#4a4ad6">Copier</span>
<div class="a" style="left:326.4px;top:276px;width:12.4px;height:8px;background:#0a74d6"></div>
<span class="t" style="left:328.3px;top:277.2px;font-size:6px;font-weight:bold;color:#fff">18</span>
</body></html>
